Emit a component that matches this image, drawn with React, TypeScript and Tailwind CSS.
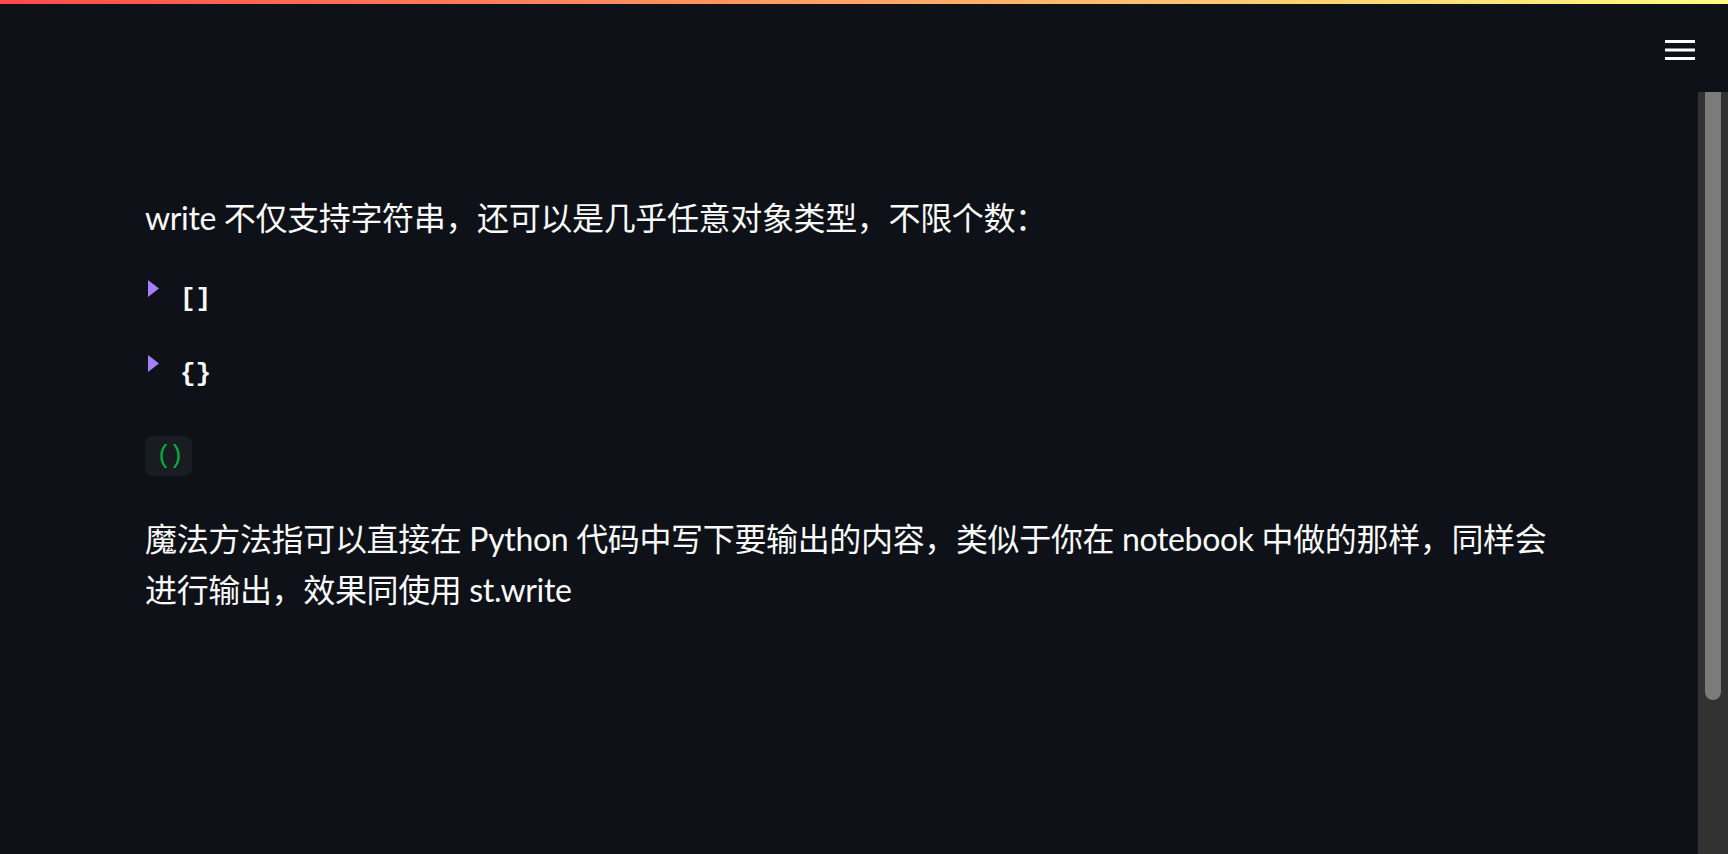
import { ReactNode } from "react";

const font = {
  fontFamily: 'Lato, "Noto Sans CJK SC", sans-serif',
};

function MenuIcon() {
  return (
    <svg width="30" height="21" viewBox="0 0 30 21" fill="#ffffff">
      <rect x="0" y="0" width="30" height="3" />
      <rect x="0" y="8.5" width="30" height="3" />
      <rect x="0" y="17" width="30" height="3" />
    </svg>
  );
}

function JsonRow({ children, className }: { children: ReactNode; className?: string }) {
  return (
    <div className={`flex items-start h-[40px] ${className ?? ""}`}>
      <svg width="11" height="17" viewBox="0 0 11 17" className="ml-[3px] mt-[1px]">
        <polygon points="0,0 11,8.5 0,17" fill="#a87ffb" />
      </svg>
      <span className="ml-[21px] text-[26px] leading-[40px] font-bold text-[#fafafa] font-['Liberation_Mono',monospace]">
        {children}
      </span>
    </div>
  );
}

export default function App() {
  return (
    <div className="h-screen w-full bg-[#0e1117] flex flex-col overflow-hidden" style={font}>
      <div className="h-[4px] w-full shrink-0 bg-[linear-gradient(90deg,#ff4b4b,#fffd80)]" />
      <header className="h-[88px] shrink-0 flex justify-end items-start pr-[33px] pt-[36px]">
        <MenuIcon />
      </header>
      <div className="flex flex-1 min-h-0">
        <main className="flex-1 min-w-0">
          <div className="mx-auto max-w-[1472px] px-8 pt-[100px] text-[#fafafa]">
            <p className="text-[32px] leading-[1.6] tracking-[-0.35px]">
              write 不仅支持字符串，还可以是几乎任意对象类型，不限个数：
            </p>
            <JsonRow className="mt-[36px]">[]</JsonRow>
            <JsonRow className="mt-[35px]">{"{}"}</JsonRow>
            <div className="mt-[42px] inline-flex h-[40px] items-center rounded-lg bg-[#1a1c24] px-[11px]">
              <span className="text-[26px] leading-none tracking-[-3px] text-[#09ab3b] font-['Liberation_Mono',monospace]">
                ()
              </span>
            </div>
            <p className="mt-[37px] text-[32px] leading-[1.6] tracking-[-0.35px]">
              魔法方法指可以直接在 Python 代码中写下要输出的内容，类似于你在 notebook 中做的那样，同样会进行输出，效果同使用 st.write
            </p>
          </div>
        </main>
        <div className="w-[30px] shrink-0 bg-[#323232] flex justify-center">
          <div className="w-[16px] h-[608px] bg-[#7b7b7b] rounded-b-full" />
        </div>
      </div>
    </div>
  );
}
